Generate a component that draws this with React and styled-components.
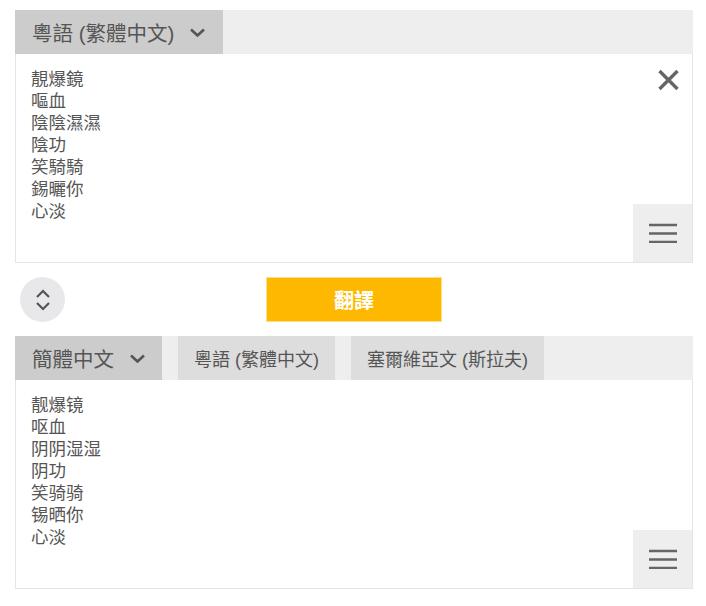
import styled, { createGlobalStyle } from "styled-components";

const GlobalStyle = createGlobalStyle`
  body {
    margin: 0;
    background: #fff;
    font-family: "Liberation Sans", "Noto Sans CJK TC", sans-serif;
  }
`;

const sourceLines = ["靚爆鏡", "嘔血", "陰陰濕濕", "陰功", "笑騎騎", "錫曬你", "心淡"];
const targetLines = ["靓爆镜", "呕血", "阴阴湿湿", "阴功", "笑骑骑", "锡晒你", "心淡"];

const Page = styled.div`
  width: 678px;
  padding: 10px 0 0 15px;
`;

const Panel = styled.section`
  display: flex;
  flex-direction: column;
`;

const Header = styled.div`
  display: flex;
  height: 44px;
  gap: ${(p) => p.gap || 0}px;
  background: #eeeeee;
`;

const Tab = styled.div`
  display: flex;
  align-items: center;
  gap: ${(p) => (p.active ? 15 : 0)}px;
  padding: 0 ${(p) => p.pr || 16}px 0 ${(p) => p.pl || 17}px;
  background: ${(p) => (p.active ? "#cccccc" : "#dddddd")};
  color: #555;
  font-size: ${(p) => (p.active ? 20.5 : 18)}px;
  white-space: nowrap;
`;

const Body = styled.div`
  position: relative;
  height: 209px;
  box-sizing: border-box;
  border: 1px solid #e4e4e4;
  border-top: none;
  padding: 14px 15px;
`;

const Lines = styled.div`
  font-size: 17.5px;
  line-height: 22px;
  color: #555;
`;

const CloseButton = styled.button`
  position: absolute;
  top: 12px;
  right: 10px;
  width: 28px;
  height: 28px;
  padding: 0;
  border: none;
  background: none;
  display: flex;
  align-items: center;
  justify-content: center;
`;

const MenuButton = styled.button`
  position: absolute;
  right: 0;
  bottom: 0;
  width: 59px;
  height: 58px;
  border: none;
  padding: 0;
  background: #eeeeee;
  display: flex;
  align-items: center;
  justify-content: center;
`;

const Middle = styled.div`
  display: flex;
  align-items: center;
  height: 73px;
  padding-left: 5px;
`;

const SwapButton = styled.button`
  width: 45px;
  height: 45px;
  border-radius: 50%;
  border: none;
  padding: 0;
  background: #e8e8ea;
  display: flex;
  align-items: center;
  justify-content: center;
`;

const TranslateButton = styled.button`
  margin-left: 201px;
  width: 176px;
  height: 45px;
  box-sizing: border-box;
  border: 1px solid #ffe08a;
  background: #ffb800;
  color: #fff;
  font-family: "Noto Sans CJK TC", sans-serif;
  font-weight: 700;
  font-size: 20px;
`;

const Chevron = ({ w = 17, h = 9 }) => (
  <svg width={w} height={h} viewBox="0 0 17 9">
    <path d="M2 1.5 L8.5 7.5 L15 1.5" fill="none" stroke="#555" strokeWidth="2.6" />
  </svg>
);

const CloseIcon = () => (
  <svg width="23" height="22" viewBox="0 0 23 22">
    <path d="M2.5 2 L20.5 20 M20.5 2 L2.5 20" stroke="#666" strokeWidth="3.4" />
  </svg>
);

const MenuIcon = () => (
  <svg width="28" height="20" viewBox="0 0 28 20">
    <path d="M0 2 H28 M0 10.5 H28 M0 19 H28" stroke="#666" strokeWidth="2.6" />
  </svg>
);

const SwapIcon = () => (
  <svg width="16" height="22" viewBox="0 0 16 22">
    <path d="M2 8 L8 2 L14 8 M2 14 L8 20 L14 14" fill="none" stroke="#555" strokeWidth="2.2" />
  </svg>
);

const App = () => {
  return (
    <Page>
      <GlobalStyle />
      <Panel>
        <Header>
          <Tab active pr={17}>
            粵語 (繁體中文) <Chevron />
          </Tab>
        </Header>
        <Body>
          <Lines>
            {sourceLines.map((line) => (
              <div key={line}>{line}</div>
            ))}
          </Lines>
          <CloseButton>
            <CloseIcon />
          </CloseButton>
          <MenuButton>
            <MenuIcon />
          </MenuButton>
        </Body>
      </Panel>

      <Middle>
        <SwapButton>
          <SwapIcon />
        </SwapButton>
        <TranslateButton>翻譯</TranslateButton>
      </Middle>

      <Panel>
        <Header gap={16}>
          <Tab active pr={16}>
            簡體中文 <Chevron />
          </Tab>
          <Tab pl={16} pr={16}>粵語 (繁體中文)</Tab>
          <Tab pl={16} pr={16}>塞爾維亞文 (斯拉夫)</Tab>
        </Header>
        <Body>
          <Lines>
            {targetLines.map((line) => (
              <div key={line}>{line}</div>
            ))}
          </Lines>
          <MenuButton>
            <MenuIcon />
          </MenuButton>
        </Body>
      </Panel>
    </Page>
  );
};

export default App;
